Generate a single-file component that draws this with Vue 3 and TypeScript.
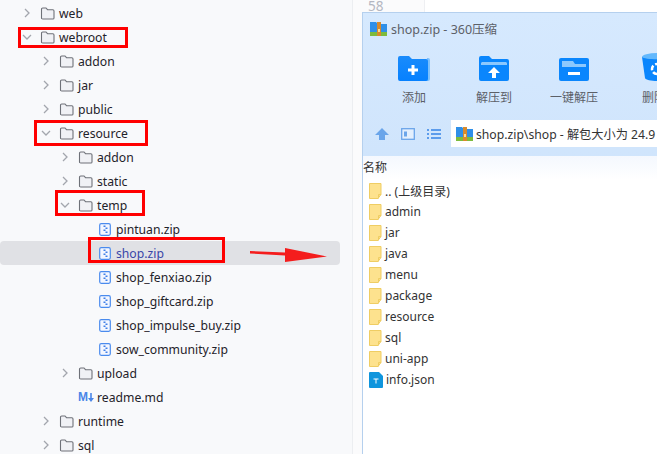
<script setup lang="ts">
interface Row { name: string; depth: number; kind: 'closed' | 'open' | 'zip' | 'md'; active?: boolean }
const rows: Row[] = [
  { name: 'web', depth: 0, kind: 'closed' },
  { name: 'webroot', depth: 0, kind: 'open' },
  { name: 'addon', depth: 1, kind: 'closed' },
  { name: 'jar', depth: 1, kind: 'closed' },
  { name: 'public', depth: 1, kind: 'closed' },
  { name: 'resource', depth: 1, kind: 'open' },
  { name: 'addon', depth: 2, kind: 'closed' },
  { name: 'static', depth: 2, kind: 'closed' },
  { name: 'temp', depth: 2, kind: 'open' },
  { name: 'pintuan.zip', depth: 3, kind: 'zip' },
  { name: 'shop.zip', depth: 3, kind: 'zip', active: true },
  { name: 'shop_fenxiao.zip', depth: 3, kind: 'zip' },
  { name: 'shop_giftcard.zip', depth: 3, kind: 'zip' },
  { name: 'shop_impulse_buy.zip', depth: 3, kind: 'zip' },
  { name: 'sow_community.zip', depth: 3, kind: 'zip' },
  { name: 'upload', depth: 2, kind: 'closed' },
  { name: 'readme.md', depth: 2, kind: 'md' },
  { name: 'runtime', depth: 1, kind: 'closed' },
  { name: 'sql', depth: 1, kind: 'closed' },
]
const entries = ['.. (上级目录)', 'admin', 'jar', 'java', 'menu', 'package', 'resource', 'sql', 'uni-app']
const marks = [
  { left: 18, top: 27, width: 110, height: 21 },
  { left: 34, top: 120, width: 114, height: 26 },
  { left: 55, top: 190, width: 90, height: 26 },
  { left: 88, top: 237, width: 137, height: 26 },
]
</script>

<template>
  <div class="page">
    <aside class="tree">
      <div v-for="(r, i) in rows" :key="i" class="row" :class="{ active: r.active }" :style="{ paddingLeft: 17 + r.depth * 19 + 'px' }">
        <span class="twist">
          <svg v-if="r.kind === 'closed'" width="8" height="10" viewBox="0 0 8 10"><path d="M2 1l4 4-4 4" fill="none" stroke="#a3a6ad" stroke-width="1.3" /></svg>
          <svg v-else-if="r.kind === 'open'" width="10" height="8" viewBox="0 0 10 8"><path d="M1 2l4 4 4-4" fill="none" stroke="#a3a6ad" stroke-width="1.3" /></svg>
        </span>
        <svg v-if="r.kind === 'closed' || r.kind === 'open'" class="ficon" width="15" height="13" viewBox="0 0 15 13">
          <path d="M1.500 2.200c0-.7.5-1.200 1.200-1.200h3.300l1.500 1.700h5.300c.7 0 1.200.5 1.200 1.200v7c0 .7-.5 1.100-1.200 1.100H2.700c-.7 0-1.200-.4-1.200-1.100z" fill="#f0f1f5" stroke="#6e7178" stroke-width="1.100" />
        </svg>
        <svg v-else-if="r.kind === 'zip'" class="zicon" width="12" height="13" viewBox="0 0 12 13">
          <rect x=".7" y=".7" width="10.600" height="11.600" rx="1.500" fill="#f4f7ff" stroke="#4a8bee" stroke-width="1.200" />
          <path d="M4.500 2.500h2v1.500h-2zM6.500 4.500h2V6h-2zM4.500 6.500h2V8h-2zM6.500 8.500h2V10h-2z" fill="#3f7fe8" />
        </svg>
        <span v-else class="md">M<svg width="6" height="9" viewBox="0 0 6 9"><path d="M2.200 0h1.600v5H6L3 9 0 5h2.200z" fill="#4a86e8" /></svg></span>
        <span class="label">{{ r.name }}</span>
      </div>
    </aside>

    <main class="editor">
      <div class="gutter"><span>58</span></div>
      <section class="win">
        <header class="title">
          <svg width="17" height="15" viewBox="0 0 17 15">
            <path d="M0 1h6l2 2h9v9H0z" fill="#2f8fe8" />
            <rect y="11" width="17" height="4" fill="#7dbb3d" />
            <rect x="7" y="1" width="4" height="14" fill="#d88a2c" />
            <rect x="8" y="8" width="2" height="3" fill="#f9dc96" />
          </svg>
          <span>shop.zip - 360压缩</span>
        </header>
        <div class="tools">
          <div class="tool t1">
            <div class="ic">
              <svg width="32" height="25" viewBox="0 0 32 25">
                <path d="M29 2h1a2 2 0 012 2v19a2 2 0 01-2 2h-3z" fill="#7cc0fd" />
                <path d="M2 0h9l3 3h14a2 2 0 012 2v18a2 2 0 01-2 2H2a2 2 0 01-2-2V2a2 2 0 012-2z" fill="url(#bl1)" />
                <path d="M13.500 9h3v3.500H20v3h-3.500V19h-3v-3.500H10v-3h3.500z" fill="#fff" />
                <defs><linearGradient id="bl1" x1="0" y1="0" x2="0" y2="1"><stop offset="0" stop-color="#1a8bfb" /><stop offset="1" stop-color="#0681ff" /></linearGradient></defs>
              </svg>
            </div>
            <span>添加</span>
          </div>
          <div class="tool t2">
            <div class="ic">
              <svg width="30" height="25" viewBox="0 0 30 25">
                <path d="M2 0h8l3 3h15a2 2 0 012 2v18a2 2 0 01-2 2H2a2 2 0 01-2-2V2a2 2 0 012-2z" fill="#0a86fd" />
                <path d="M2 7l1-1h24l1 1v2H2z" fill="#8cc8fd" />
                <path d="M15 11l6 6h-4v5h-4v-5H9z" fill="#fff" />
              </svg>
            </div>
            <span>解压到</span>
          </div>
          <div class="tool t3">
            <div class="ic">
              <svg width="30" height="23" viewBox="0 0 30 23">
                <path d="M2 0h26a2 2 0 012 2v19a2 2 0 01-2 2H2a2 2 0 01-2-2V2a2 2 0 012-2z" fill="#0a86fd" />
                <path d="M3 3h11l2 3h11v3H3z" fill="#8cc8fd" />
                <rect x="9" y="14" width="12" height="3" fill="#fff" />
              </svg>
            </div>
            <span>一键解压</span>
          </div>
          <div class="tool t4">
            <div class="ic">
              <svg width="30" height="28" viewBox="0 0 30 28">
                <ellipse cx="15" cy="4" rx="15" ry="4" fill="#63b8fc" />
                <path d="M0 4c2 3 28 3 30 0l-3 21c-1 4-23 4-24 0z" fill="#0a86fd" />
                <circle cx="15" cy="16" r="5" fill="none" stroke="#fff" stroke-width="2.500" stroke-dasharray="5 2" />
              </svg>
            </div>
            <span>删除</span>
          </div>
        </div>
        <div class="nav">
          <svg class="n1" width="14" height="14" viewBox="0 0 14 14"><path d="M7 1l7 7h-4v5H4V8H0z" fill="#6aa5ea" /></svg>
          <svg class="n2" width="14" height="12" viewBox="0 0 14 12"><rect x=".7" y=".7" width="12.600" height="10.600" fill="#e3effd" stroke="#6aa5ea" stroke-width="1.300" /><rect x="3" y="3.500" width="3" height="5" fill="#6aa5ea" /></svg>
          <svg class="n3" width="14" height="10" viewBox="0 0 14 10"><path d="M0 0h2v2H0zM4 0h10v2H4zM0 4h2v2H0zM4 4h10v2H4zM0 8h2v2H0zM4 8h10v2H4z" fill="#5c9cec" /></svg>
          <div class="path">
            <svg width="17" height="15" viewBox="0 0 17 15">
              <path d="M0 1h6l2 2h9v9H0z" fill="#2f8fe8" />
              <rect y="11" width="17" height="4" fill="#7dbb3d" />
              <rect x="7" y="1" width="4" height="14" fill="#d88a2c" />
              <rect x="8" y="8" width="2" height="3" fill="#f9dc96" />
            </svg>
            <span>shop.zip\shop - 解包大小为 24.9</span>
          </div>
        </div>
        <div class="list">
          <div class="head">名称</div>
          <div v-for="e in entries" :key="e" class="entry">
            <svg width="13" height="16" viewBox="0 0 13 16">
              <path d="M.5.500h11.500v11l-3 4H.5z" fill="#fde28e" stroke="#efcd63" />
              <path d="M9.500 15.500v-4h2.500" fill="none" stroke="#efcd63" />
            </svg>
            <span>{{ e }}</span>
          </div>
          <div class="entry">
            <svg width="14" height="16" viewBox="0 0 14 16">
              <path d="M1 0h9l4 4v11a1 1 0 01-1 1H1a1 1 0 01-1-1V1a1 1 0 011-1z" fill="#0f95dd" />
              <path d="M4.500 6.500h5v1h-2v4h-1v-4h-2z" fill="#fff" />
            </svg>
            <span>info.json</span>
          </div>
        </div>
      </section>
    </main>

    <i v-for="(m, i) in marks" :key="i" class="mark" :style="{ left: m.left + 'px', top: m.top + 'px', width: m.width + 'px', height: m.height + 'px' }"></i>
    <svg class="arrow" width="80" height="18" viewBox="0 0 80 18">
      <path d="M1 5l35 1.500V2l42 8.500L36 16V9.500L1 7.500z" fill="#f41d1d" />
    </svg>
  </div>
</template>

<style scoped>
.page {
  position: relative;
  display: flex;
  width: 657px;
  height: 454px;
  overflow: hidden;
  background: #fff;
  font-family: "Noto Sans", "Noto Sans CJK SC", sans-serif;
  color: #333;
}
.tree {
  width: 353px;
  flex: none;
  padding-top: 1px;
  background: #f8f9fb;
  border-right: 1px solid #eceef1;
  box-sizing: border-box;
}
.row {
  display: flex;
  align-items: center;
  height: 24px;
  font-size: 12.2px;
  color: #1f222a;
}
.row.active {
  background: #e0e1e5;
  border-radius: 4px;
  margin-right: 12px;
  color: #3a46a8;
}
.twist {
  width: 19px;
  flex: none;
  display: flex;
  justify-content: center;
  margin-right: 4px;
}
.ficon {
  flex: none;
  margin-right: 4px;
}
.zicon {
  flex: none;
  margin-left: 2px;
  margin-right: 5px;
}
.md {
  flex: none;
  width: 16px;
  margin-right: 3px;
  display: flex;
  align-items: center;
  gap: 0;
  font-family: "Liberation Sans", sans-serif;
  font-size: 12px;
  font-weight: 700;
  color: #4a86e8;
  white-space: nowrap;
}
.editor {
  flex: 1;
  min-width: 0;
  position: relative;
  padding-left: 9px;
  padding-top: 12px;
  background: #fff;
}
.gutter {
  position: absolute;
  left: 0;
  top: 0;
  width: 72px;
  height: 100%;
  box-sizing: border-box;
  background: #fbfbfc;
  border-right: 1px solid #eeeff2;
  padding-left: 15px;
  font-size: 13.5px;
  line-height: 13px;
  color: #b4b7c2;
}
.win {
  position: relative;
  height: 442px;
  width: 295px;
  box-sizing: border-box;
  border-left: 1px solid #b5d0ee;
  border-top: 1px solid #b5d0ee;
  background: linear-gradient(180deg, #d6e9fe 0%, #c3dcf8 100%);
  display: flex;
  flex-direction: column;
  overflow: hidden;
}
.title {
  height: 32px;
  flex: none;
  display: flex;
  align-items: center;
  gap: 4px;
  padding-left: 7px;
  padding-bottom: 1px;
  box-sizing: border-box;
  font-size: 12.5px;
  color: #5c6068;
  white-space: nowrap;
}
.tools {
  height: 66px;
  flex: none;
  position: relative;
  font-size: 12px;
  color: #5c6068;
}
.tool {
  position: absolute;
  top: 8px;
  display: flex;
  flex-direction: column;
  align-items: center;
  width: 60px;
  gap: 8px;
  white-space: nowrap;
}
.ic {
  height: 28px;
  width: 100%;
  display: flex;
  align-items: flex-end;
  justify-content: center;
}
.tool span {
  line-height: 17px;
}
.t1 { left: 21px; }
.t2 { left: 101px; }
.t3 { left: 181px; }
.t4 { left: 261px; }
.t4 .ic svg { margin-left: 6px; flex: none; }
.nav {
  height: 45px;
  flex: none;
  display: flex;
  align-items: center;
  padding-left: 12px;
  box-sizing: border-box;
}
.n1, .n2 { margin-right: 12px; flex: none; }
.n3 { margin-right: 10px; flex: none; }
.path {
  flex: 1;
  height: 27px;
  display: flex;
  align-items: center;
  gap: 3px;
  padding-left: 5px;
  background: #fff;
  font-size: 12.2px;
  color: #333;
  white-space: nowrap;
  overflow: hidden;
}
.path svg { flex: none; }
.list {
  flex: 1;
  background: #fff;
}
.head {
  height: 24px;
  padding-top: 4px;
  box-sizing: border-box;
  background: linear-gradient(180deg, #f4f8fe, #fff);
  font-size: 12px;
  line-height: 16px;
  color: #333;
}
.entry {
  height: 21px;
  display: flex;
  align-items: center;
  gap: 3px;
  padding-left: 6px;
  font-size: 12px;
  color: #333;
}
.mark {
  position: absolute;
  box-sizing: border-box;
  border: 3px solid #f00;
}
.arrow {
  position: absolute;
  left: 249px;
  top: 246px;
}
</style>
